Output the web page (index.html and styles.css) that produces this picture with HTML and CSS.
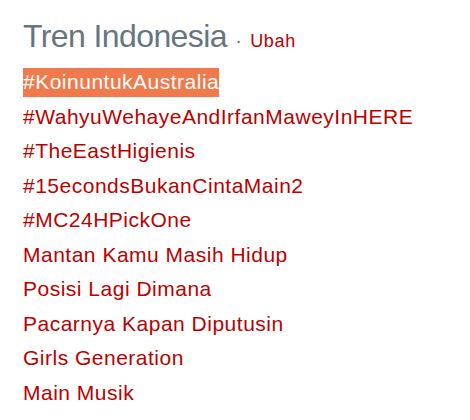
FILE: index.html
```html
<!DOCTYPE html>
<html lang="id">

<head>
  <meta charset="UTF-8" />
  <meta name="viewport" content="width=device-width, initial-scale=1.0" />
  <title>Tren Indonesia</title>
  <link rel="stylesheet" href="styles.css">
</head>

<body>
  <section class="trends">
    <h2 class="trends-title">Tren Indonesia <span class="trends-sep">·</span> <a class="trends-change" href="#">Ubah</a></h2>

    <ul class="trends-list">
      <li><a class="trend active" href="#">#KoinuntukAustralia</a></li>
      <li><a class="trend" href="#">#WahyuWehayeAndIrfanMaweyInHERE</a></li>
      <li><a class="trend" href="#">#TheEastHigienis</a></li>
      <li><a class="trend" href="#">#15econdsBukanCintaMain2</a></li>
      <li><a class="trend" href="#">#MC24HPickOne</a></li>
      <li><a class="trend" href="#">Mantan Kamu Masih Hidup</a></li>
      <li><a class="trend" href="#">Posisi Lagi Dimana</a></li>
      <li><a class="trend" href="#">Pacarnya Kapan Diputusin</a></li>
      <li><a class="trend" href="#">Girls Generation</a></li>
      <li><a class="trend" href="#">Main Musik</a></li>
    </ul>
  </section>
</body>

</html>
```

FILE: styles.css
```css
* {
  margin: 0;
  padding: 0;
  box-sizing: border-box;
}

body {
  font-family: 'Liberation Sans', Arial, sans-serif;
  background: #fff;
  color: #66757f;
}

.trends {
  padding: 18px 23px 0;
}

.trends-title {
  font-size: 32px;
  font-weight: normal;
  line-height: 36px;
  letter-spacing: -0.6px;
  color: #66757f;
  white-space: nowrap;
}

.trends-sep {
  font-size: 20px;
  letter-spacing: 0;
}

.trends-change {
  font-size: 18px;
  letter-spacing: 0.7px;
  color: #bb0000;
  text-decoration: none;
}

.trends-list {
  list-style: none;
  margin-top: 6px;
}

.trends-list li {
  font-size: 21px;
  line-height: 34.5px;
  letter-spacing: 0.5px;
  white-space: nowrap;
}

.trend {
  color: #bb0000;
  text-decoration: none;
}

.trend.active {
  background: #f07a4b;
  color: #fff;
  padding: 2px 0 4px 0;
}
```
